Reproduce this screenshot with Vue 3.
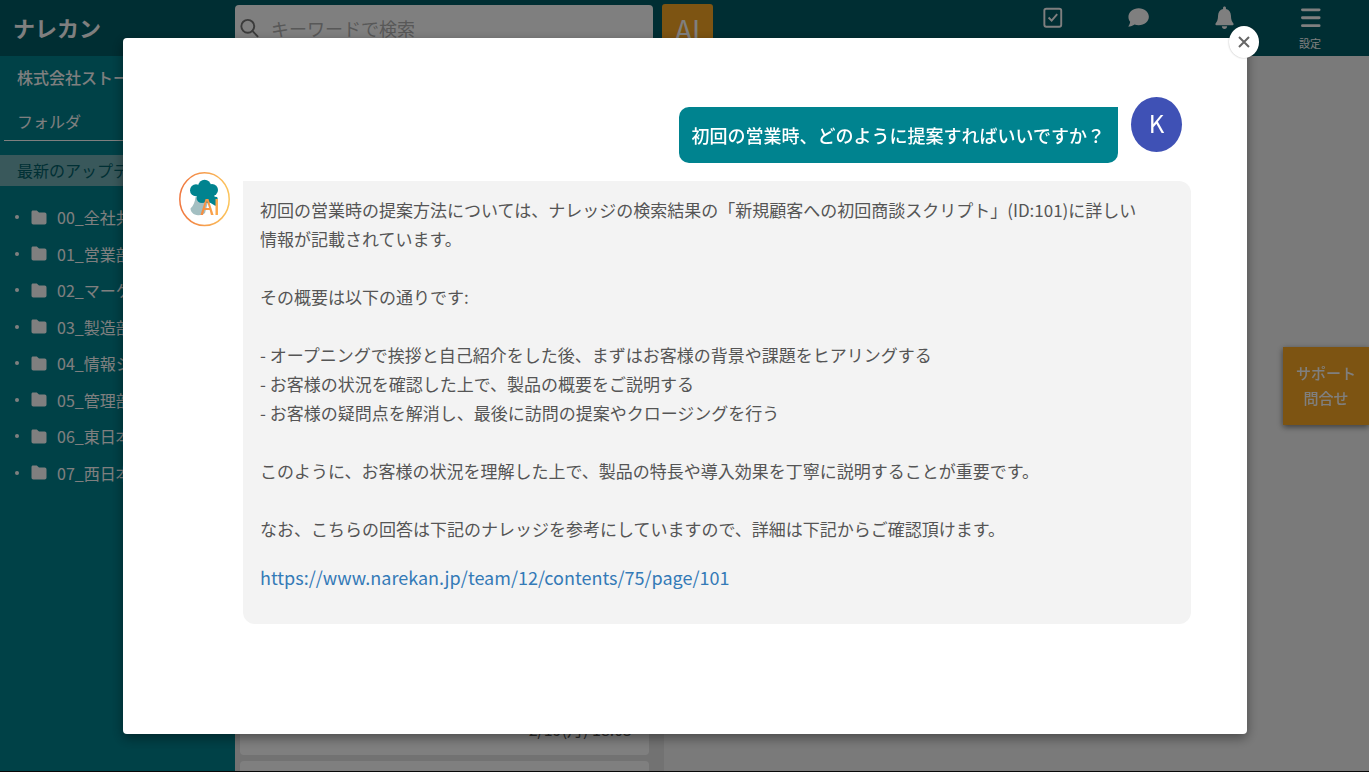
<script setup>
const folders = [
  '00_全社共',
  '01_営業部',
  '02_マーケ',
  '03_製造部',
  '04_情報シ',
  '05_管理部',
  '06_東日本',
  '07_西日本',
]

const cards = [
  { id: 1, time: '' },
  { id: 2, time: '' },
  { id: 3, time: '' },
  { id: 4, time: '2/19(月) 18:03' },
  { id: 5, time: '' },
]

const question = '初回の営業時、どのように提案すればいいですか？'

const answer = `初回の営業時の提案方法については、ナレッジの検索結果の「新規顧客への初回商談スクリプト」(ID:101)に詳しい
情報が記載されています。

その概要は以下の通りです:

- オープニングで挨拶と自己紹介をした後、まずはお客様の背景や課題をヒアリングする
- お客様の状況を確認した上で、製品の概要をご説明する
- お客様の疑問点を解消し、最後に訪問の提案やクロージングを行う

このように、お客様の状況を理解した上で、製品の特長や導入効果を丁寧に説明することが重要です。

なお、こちらの回答は下記のナレッジを参考にしていますので、詳細は下記からご確認頂けます。`

const link = 'https://www.narekan.jp/team/12/contents/75/page/101'
</script>

<template>
  <div class="page">
    <header class="topbar">
      <div class="logo">ナレカン</div>
      <label class="search">
        <svg class="search-icon" viewBox="0 0 20 20" aria-hidden="true">
          <circle cx="8.2" cy="8.2" r="6.8" />
          <path d="M13 13 L18.500 18.800" />
        </svg>
        <input type="search" placeholder="キーワードで検索" aria-label="キーワードで検索" />
      </label>
      <button type="button" class="ai-button">AI</button>
      <nav class="tools">
        <button type="button" aria-label="タスク">
          <svg viewBox="0 0 24 24" aria-hidden="true">
            <rect x="3.500" y="2.800" width="17.600" height="18.800" rx="2" class="line" />
            <path d="M7.900 12 L11.100 15.200 L16.900 8.600" class="line" />
          </svg>
        </button>
        <button type="button" aria-label="チャット">
          <svg viewBox="0 0 24 24" aria-hidden="true">
            <path d="M12.2 2.4 C18.200 2.400 22.800 6.300 22.800 11.200 C22.800 16.100 18.200 20 12.200 20 C10.600 20 9.200 19.700 7.900 19.200 C6.200 20.500 3.800 21.500 1.200 21.500 C2.400 20.200 3.100 18.400 3.300 16.500 C2.100 15 1.500 13.200 1.500 11.200 C1.500 6.300 6.200 2.400 12.200 2.400 Z" />
          </svg>
        </button>
        <button type="button" aria-label="通知">
          <svg viewBox="0 0 24 24" aria-hidden="true">
            <path d="M12 .6 C12.900 .6 13.500 1.200 13.500 2.100 V3 C16.800 3.700 18.600 6.400 18.700 10 C18.800 14.500 19.800 16.500 21.300 18.200 C21.800 18.900 21.400 20 20.500 20 H3.500 C2.600 20 2.200 18.900 2.700 18.200 C4.200 16.500 5.200 14.500 5.300 10 C5.400 6.400 7.200 3.700 10.500 3 V2.100 C10.500 1.200 11.100 .6 12 .6 Z" />
            <path d="M9.200 21.200 H14.800 C14.800 22.900 13.500 24 12 24 C10.500 24 9.200 22.900 9.200 21.200 Z" />
          </svg>
        </button>
        <button type="button">
          <svg viewBox="0 0 24 24" aria-hidden="true">
            <path d="M3.600 4 H21 M3.600 12.200 H21 M3.600 20.500 H21" class="bars" />
          </svg>
          <span>設定</span>
        </button>
      </nav>
    </header>

    <div class="body">
      <aside class="sidebar">
        <div class="company">株式会社ストー</div>
        <h2>フォルダ</h2>
        <a href="#" class="updates">最新のアップデ</a>
        <ul>
          <li v-for="name in folders" :key="name">
            <a href="#">
              <svg viewBox="0 0 16 15" aria-hidden="true">
                <path d="M2 .5 H5.800 L8 2.500 H13.600 C14.800 2.500 15.500 3.300 15.500 4.400 V12.600 C15.500 13.800 14.800 14.500 13.600 14.500 H2.400 C1.200 14.500 .5 13.800 .5 12.600 V2 C.5 1.100 1.100 .5 2 .5 Z" />
              </svg>
              {{ name }}
            </a>
          </li>
        </ul>
      </aside>
      <section class="list">
        <article v-for="card in cards" :key="card.id" class="card">
          <time v-if="card.time">{{ card.time }}</time>
        </article>
      </section>
      <main class="content"></main>
    </div>

    <button type="button" class="support">サポート<br />問合せ</button>

    <div class="overlay">
      <div class="dialog" role="dialog" aria-modal="true">
        <button type="button" class="close" aria-label="閉じる">
          <svg viewBox="0 0 12 12" aria-hidden="true">
            <path d="M1 1 L11 11 M11 1 L1 11" />
          </svg>
        </button>

        <div class="question-row">
          <p class="question">{{ question }}</p>
          <div class="avatar">K</div>
        </div>

        <div class="answer-row">
          <svg class="bot" viewBox="0 0 51 55" role="img" aria-label="AI">
            <defs>
              <linearGradient id="ring" x1="0" y1="0" x2="1" y2="0">
                <stop offset="0" stop-color="#f07840" />
                <stop offset="1" stop-color="#fcc55c" />
              </linearGradient>
              <linearGradient id="letters" x1="0" y1="0" x2="1" y2="0">
                <stop offset="0" stop-color="#f58a42" />
                <stop offset="1" stop-color="#fdb04e" />
              </linearGradient>
            </defs>
            <ellipse cx="25.500" cy="27.200" rx="24.700" ry="26.400" fill="#fff" stroke="url(#ring)" stroke-width="1.500" />
            <path d="M16.500 25 C16 30 14.500 33.500 11.500 36.500 C11.500 40 14.500 43 19 43.200 C22 43.400 24 42.500 26 41 L29 30 L22 29 Z" fill="#a3bfc2" />
            <g fill="#00838f">
              <circle cx="25.600" cy="14" r="6.300" />
              <circle cx="17" cy="18.300" r="6" />
              <circle cx="33" cy="18" r="6" />
              <circle cx="23" cy="25.500" r="5.500" />
              <circle cx="29" cy="24.500" r="6.500" />
              <path d="M17 14 H34 V25 H19 Z" />
              <path d="M29 24 L38 25 C39.500 27 38.500 31 36.500 34 L30 30 Z" />
            </g>
            <text x="21.500" y="42.500" fill="url(#letters)">AI</text>
          </svg>
          <div class="answer">
            <p>{{ answer }}</p>
            <a :href="link">{{ link }}</a>
          </div>
        </div>
      </div>
    </div>
  </div>
</template>

<style>
body {
  margin: 0;
}
</style>

<style scoped>
.page {
  --sidebar: 235px;
  box-sizing: border-box;
  height: 100vh;
  display: flex;
  flex-direction: column;
  overflow: hidden;
  border-bottom: 1px solid #111;
  background: #f4f4f4;
  font-family: "Noto Sans CJK JP", "Noto Sans", sans-serif;
  font-size: 16px;
}

button {
  padding: 0;
  border: 0;
  background: none;
  color: inherit;
  font: inherit;
  cursor: pointer;
}

.topbar {
  flex: none;
  display: flex;
  align-items: flex-start;
  height: 56px;
  background: #005c66;
  color: #fff;
}

.logo {
  box-sizing: border-box;
  width: var(--sidebar);
  padding-left: 13px;
  font-size: 22px;
  font-weight: 700;
  line-height: 54px;
}

.search {
  box-sizing: border-box;
  display: flex;
  align-items: center;
  gap: 12px;
  width: 418px;
  height: 46px;
  margin-top: 5px;
  padding: 0 5px;
  border-radius: 4px;
  background: #fff;
}

.search-icon {
  flex: none;
  width: 19px;
  height: 20px;
  fill: none;
  stroke: #777;
  stroke-width: 2;
  stroke-linecap: round;
}

.search input {
  flex: 1;
  min-width: 0;
  padding: 0;
  border: 0;
  outline: 0;
  background: none;
  font: inherit;
  font-size: 18px;
}

.search input::placeholder {
  color: #b0b0b0;
}

.ai-button {
  width: 51px;
  height: 50px;
  margin: 4px 0 0 9px;
  border-radius: 3px;
  background: #faa824;
  font-size: 28px;
  line-height: 48px;
}

.tools {
  display: flex;
  margin-left: auto;
  padding-right: 16px;
}

.tools button {
  display: flex;
  flex-direction: column;
  align-items: center;
  gap: 6px;
  width: 86px;
  padding-top: 6px;
  font-size: 11px;
  line-height: 16px;
}

.tools svg {
  width: 23px;
  height: 23px;
  fill: #fff;
}

.tools .line {
  fill: none;
  stroke: #fff;
  stroke-width: 2;
}

.tools .bars {
  stroke: #fff;
  stroke-width: 3;
  stroke-linecap: round;
}

.body {
  flex: 1;
  min-height: 0;
  display: flex;
}

.sidebar {
  flex: none;
  width: var(--sidebar);
  background: #00828e;
  color: #fff;
}

.company {
  padding: 9px 17px 10px;
  font-weight: 500;
  line-height: 24px;
}

.sidebar h2 {
  margin: 0 4px;
  padding: 10px 13px 7px;
  border-bottom: 1px solid #fff;
  font-size: 16px;
  font-weight: 400;
  line-height: 24px;
}

.updates {
  display: block;
  margin-top: 14px;
  padding: 0 17px;
  background: #73b1b6;
  color: #00606a;
  line-height: 31px;
  text-decoration: none;
}

.sidebar ul {
  display: grid;
  grid-auto-rows: 1fr;
  height: 292px;
  margin: 13px 0 0;
  padding: 0;
  list-style: none;
}

.sidebar li {
  display: flex;
  align-items: center;
  gap: 12px;
  padding-left: 15px;
}

.sidebar li::before {
  content: "";
  width: 4px;
  height: 4px;
  border-radius: 50%;
  background: #fff;
}

.sidebar li a {
  display: flex;
  align-items: center;
  gap: 10px;
  color: #fff;
  text-decoration: none;
}

.sidebar li svg {
  width: 16px;
  height: 15px;
  fill: #fff;
}

.list {
  flex: none;
  box-sizing: border-box;
  display: flex;
  flex-direction: column;
  gap: 6px;
  width: 429px;
  padding: 5px 15px 0 5px;
  overflow: hidden;
  background: #e4e4e4;
}

.card {
  flex: none;
  box-sizing: border-box;
  display: flex;
  align-items: flex-end;
  justify-content: flex-end;
  height: 169px;
  padding: 14px 17px;
  border-radius: 4px;
  background: #fff;
  color: #555;
}

.content {
  flex: 1;
}

.support {
  position: fixed;
  top: 347px;
  right: 0;
  width: 86px;
  padding: 13px 0 15px;
  background: #faa824;
  box-shadow: 0 2px 6px rgba(0, 0, 0, 0.5);
  color: #fff;
  font-size: 15px;
  font-weight: 500;
  line-height: 25px;
}

.overlay {
  position: fixed;
  inset: 0;
  box-sizing: border-box;
  display: flex;
  padding: 38px 122px 38px 123px;
  background: rgba(0, 0, 0, 0.5);
}

.dialog {
  position: relative;
  flex: 1;
  min-width: 0;
  box-sizing: border-box;
  padding: 59px 56px;
  border-radius: 4px;
  background: #fff;
  box-shadow: 0 4px 12px rgba(0, 0, 0, 0.4);
}

.close {
  position: absolute;
  top: -12px;
  right: -12px;
  display: grid;
  place-items: center;
  width: 30px;
  height: 32px;
  border-radius: 50%;
  background: #fff;
  box-shadow: 0 0 2px rgba(0, 0, 0, 0.3);
}

.close svg {
  width: 12px;
  height: 12px;
  stroke: #666;
  stroke-width: 2;
}

.question-row {
  display: flex;
  justify-content: flex-end;
  gap: 13px;
  padding-right: 9px;
}

.question {
  margin: 10px 0 0;
  padding: 0 13px;
  border-radius: 10px 0 10px 10px;
  background: #00838f;
  color: #fff;
  font-size: 18px;
  font-weight: 500;
  line-height: 56px;
}

.avatar {
  width: 51px;
  height: 55px;
  border-radius: 50%;
  background: #3f51b5;
  color: #fff;
  font-size: 24px;
  line-height: 51px;
  text-align: center;
}

.answer-row {
  display: flex;
  align-items: flex-start;
  gap: 13px;
  margin-top: 9px;
}

.bot {
  flex: none;
  width: 51px;
  height: 55px;
}

.bot text {
  font-size: 21px;
  font-weight: 500;
}

.answer {
  flex: 1;
  min-width: 0;
  margin-top: 9px;
  padding: 14px 17px 32px;
  border-radius: 0 12px 12px 12px;
  background: #f3f3f3;
  color: #555;
  font-size: 17px;
  line-height: 29px;
}

.answer p {
  margin: 0 0 20px;
  white-space: pre-line;
}

.answer a {
  display: block;
  color: #337ab7;
  font-size: 18px;
  text-decoration: none;
}
</style>
